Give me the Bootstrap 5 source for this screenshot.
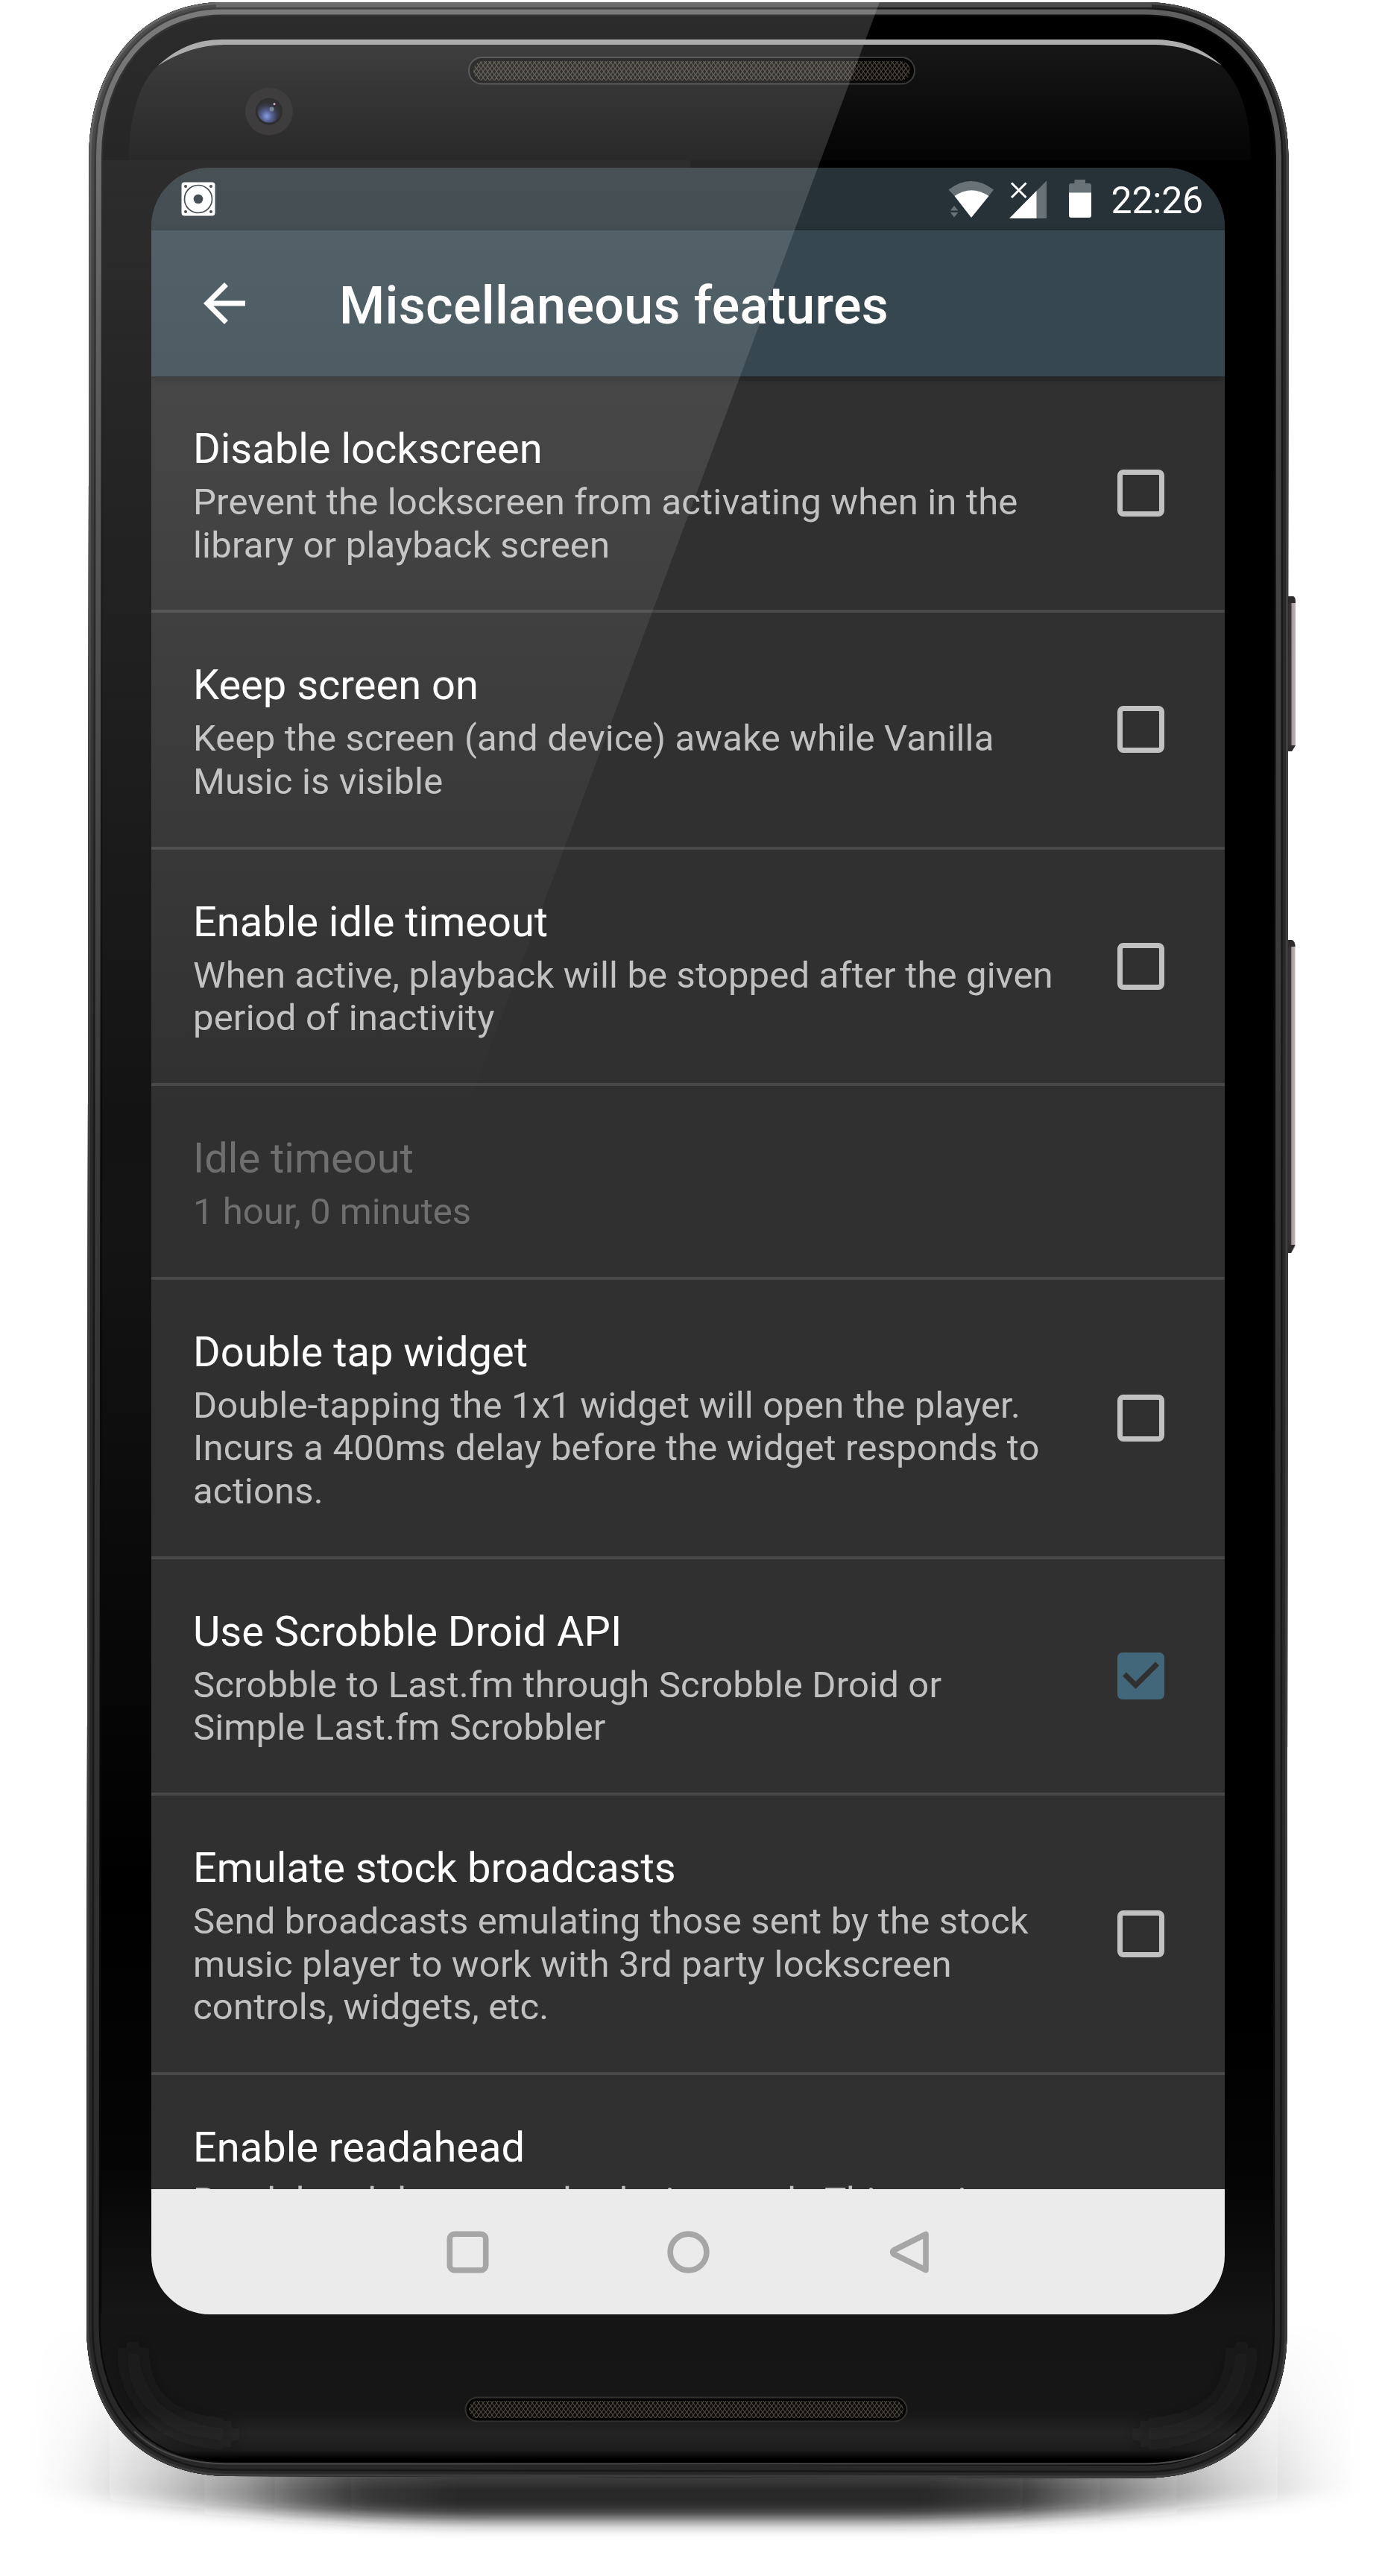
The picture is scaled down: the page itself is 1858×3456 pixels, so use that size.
<!DOCTYPE html>
<html lang="en">
<head>
<meta charset="utf-8">
<title>Miscellaneous features</title>
<meta name="viewport" content="width=device-width, initial-scale=1">
<link href="https://cdn.jsdelivr.net/npm/bootstrap@5.3.0/dist/css/bootstrap.min.css" rel="stylesheet">
<script src="https://cdn.jsdelivr.net/npm/bootstrap@5.3.0/dist/js/bootstrap.bundle.min.js"></script>
<style>
  body { background: #fff; font-family: Roboto, sans-serif; }
  .stage { width: 1858px; height: 3456px; padding: 225px 215px 351px 203px; }
  .device-art, .device-sheen { position: absolute; left: 0; top: 0; width: 1858px; height: 3456px; pointer-events: none; }
  .device-sheen { z-index: 5; }
  .phone-screen { width: 1440px; height: 2880px; border-radius: 79px; background: #303030; z-index: 2; color: #fff; }
  .status-strip { height: 84px; background: #273238; padding: 0 29px 0 40px; flex: none; }
  .status-strip .clock { font-size: 50px; line-height: 84px; margin-left: 26px; padding-top: 3px; letter-spacing: -.2px; }
  .app-toolbar { height: 196px; background: #37474f; padding-left: 56px; flex: none; box-shadow: 0 3px 9px rgba(0,0,0,.35); z-index: 1; }
  .app-toolbar h1 { font-size: 70px; line-height: 82px; font-weight: 500; margin: 6px 0 0 112px; letter-spacing: .32px; }
  .pref-list { flex: 1 1 0; min-height: 0; }
  .pref-row { padding: 64px 81px 0 56px; border-bottom: 4px solid #484848; flex: none; }
  .pref-name { font-size: 56px; line-height: 66px; white-space: nowrap; }
  .pref-note { font-size: 49px; line-height: 57.5px; margin-top: 10px; color: #c1c1c1; white-space: nowrap; letter-spacing: .18px; }
  .pref-2 { height: 317.3px; }
  .pref-1 { height: 260px; }
  .pref-3 { height: 375px; }
  .pref-off .pref-name, .pref-off .pref-note { color: #6f6f6f; letter-spacing: 0; }
  .tick { width: 63px; height: 63px; margin-top: -64px; flex: none; align-self: center; }
  .tick-empty { border: 7px solid #c1c1c1; border-radius: 8px; }
  .nav-strip { height: 168px; background: #ebebeb; flex: none; gap: 239px; }
</style>
</head>
<body>
<div class="stage position-relative overflow-hidden">

  <!-- handset body -->
  <svg class="device-art" viewBox="0 0 1858 3456" aria-hidden="true">
    <defs>
      <path id="body" d="M298 3H1536C1656 3 1728.500 96 1728.500 210L1726.500 3130C1726.500 3250 1652 3324.500 1536 3324.500L304 3322C186 3320 116 3240 116 3120L119.500 210C119.500 92 188 3 298 3Z"/>
      <clipPath id="bodyClip"><use href="#body"/></clipPath>
      <linearGradient id="edgeOuter" x1="0" y1="0" x2="0" y2="3456" gradientUnits="userSpaceOnUse">
        <stop offset="0" stop-color="#4a4a4a"/><stop offset=".2" stop-color="#414141"/><stop offset="1" stop-color="#3c3c3c"/>
      </linearGradient>
      <linearGradient id="edgeBand" x1="0" y1="0" x2="0" y2="3456" gradientUnits="userSpaceOnUse">
        <stop offset="0" stop-color="#606060"/><stop offset=".15" stop-color="#464646"/><stop offset=".5" stop-color="#363636"/><stop offset="1" stop-color="#262626"/>
      </linearGradient>
      <linearGradient id="leftBezel" x1="0" y1="215" x2="0" y2="3105" gradientUnits="userSpaceOnUse">
        <stop offset="0" stop-color="#080808"/><stop offset=".3" stop-color="#111"/><stop offset=".5" stop-color="#141414"/><stop offset=".68" stop-color="#080808"/><stop offset=".8" stop-color="#000"/><stop offset=".93" stop-color="#050505"/><stop offset="1" stop-color="#161616"/>
      </linearGradient>
      <linearGradient id="rightBezel" x1="0" y1="2700" x2="0" y2="3105" gradientUnits="userSpaceOnUse">
        <stop offset="0" stop-color="#000"/><stop offset=".6" stop-color="#050505"/><stop offset="1" stop-color="#141414"/>
      </linearGradient>
      <linearGradient id="topFace" x1="0" y1="60" x2="0" y2="215" gradientUnits="userSpaceOnUse">
        <stop offset="0" stop-color="#171717"/><stop offset=".5" stop-color="#0d0d0d"/><stop offset="1" stop-color="#040404"/>
      </linearGradient>
      <linearGradient id="chin" x1="0" y1="3105" x2="0" y2="3305" gradientUnits="userSpaceOnUse">
        <stop offset="0" stop-color="#151515"/><stop offset=".65" stop-color="#161616"/><stop offset=".8" stop-color="#242424"/><stop offset=".91" stop-color="#1c1c1c"/><stop offset=".97" stop-color="#000"/><stop offset="1" stop-color="#000"/>
      </linearGradient>
      <linearGradient id="keySide" x1="0" x2="1" y1="0" y2="0">
        <stop offset="0" stop-color="#2c2a2b"/><stop offset=".45" stop-color="#3d363b"/><stop offset=".55" stop-color="#a39a9c"/><stop offset="1" stop-color="#c0b5b2"/>
      </linearGradient>
      <linearGradient id="floorH" x1="40" x2="1830" y1="0" y2="0" gradientUnits="userSpaceOnUse">
        <stop offset="0" stop-color="#222" stop-opacity="0"/><stop offset=".035" stop-color="#222" stop-opacity=".05"/><stop offset=".1" stop-color="#222" stop-opacity=".25"/><stop offset=".16" stop-color="#222" stop-opacity=".48"/><stop offset=".2" stop-color="#222" stop-opacity=".7"/><stop offset=".25" stop-color="#222" stop-opacity=".9"/><stop offset=".32" stop-color="#222" stop-opacity=".97"/>
        <stop offset=".67" stop-color="#222" stop-opacity=".97"/><stop offset=".74" stop-color="#222" stop-opacity=".88"/><stop offset=".79" stop-color="#222" stop-opacity=".66"/><stop offset=".84" stop-color="#222" stop-opacity=".44"/><stop offset=".9" stop-color="#222" stop-opacity=".22"/><stop offset=".965" stop-color="#222" stop-opacity=".05"/><stop offset="1" stop-color="#222" stop-opacity="0"/>
      </linearGradient>
      <linearGradient id="floorV" x1="0" y1="3110" x2="0" y2="3340" gradientUnits="userSpaceOnUse">
        <stop offset="0" stop-color="#000"/><stop offset=".5" stop-color="#555"/><stop offset="1" stop-color="#fff"/>
      </linearGradient>
      <mask id="floorMask" maskUnits="userSpaceOnUse" x="0" y="3000" width="1858" height="456"><rect y="3000" width="1858" height="456" fill="url(#floorV)"/></mask>
      <filter id="floorBlur" x="-5%" y="-20%" width="110%" height="140%"><feGaussianBlur stdDeviation="11"/></filter>
      <filter id="glowBlur" x="-60%" y="-60%" width="220%" height="220%"><feGaussianBlur stdDeviation="12"/></filter>
      <pattern id="mesh" width="6" height="8" patternUnits="userSpaceOnUse">
        <rect width="6" height="8" fill="#0b0a08"/>
        <path d="M0 0L3 4L0 8M6 0L3.500 4L6 8" fill="none" stroke="#4d483f" stroke-width="1.100"/>
      </pattern>
      <radialGradient id="lens" cx=".4" cy=".72" r=".6">
        <stop offset="0" stop-color="#6f8be0"/><stop offset=".35" stop-color="#3c4a86"/><stop offset=".75" stop-color="#16172a"/><stop offset="1" stop-color="#0b0b0e"/>
      </radialGradient>
    </defs>

    <g mask="url(#floorMask)">
      <path filter="url(#floorBlur)" fill="url(#floorH)" d="M50 3110H1810V3345Q1500 3378 1200 3381H640Q350 3378 50 3345Z"/>
    </g>

    <path d="M1727 800H1735Q1738 801 1738 806V1000L1733 1008H1727Z" fill="url(#keySide)"/>
    <path d="M1727 800H1735Q1738 801 1738 809H1727ZM1727 1008H1733L1738 1000H1727Z" fill="#2e2b2c"/>
    <path d="M1727 1261H1733Q1737.500 1263 1737.500 1268V1673L1732 1681H1727Z" fill="url(#keySide)"/>
    <path d="M1727 1261H1733Q1737.500 1263 1737.500 1270H1727ZM1727 1681H1732L1737.500 1670H1727Z" fill="#2e2b2c"/>

    <g clip-path="url(#bodyClip)">
      <use href="#body" fill="#000"/>
      <rect x="136" y="215" width="790" height="2890" fill="url(#leftBezel)"/>
      <rect x="920" y="2700" width="790" height="405" fill="url(#rightBezel)"/>
      <path d="M173 215C173 150 190 100 222 80Q250 60 300 60H1550Q1600 60 1634 84C1662 108 1678 150 1678 215Z" fill="url(#topFace)"/>
      <path d="M134 3104H1710V3130C1710 3235 1640 3306 1536 3306H304C200 3304 134 3230 134 3120Z" fill="url(#chin)"/>
      <path d="M178 3150C180 3225 225 3264 310 3266" fill="none" stroke="#222" stroke-opacity=".7" stroke-width="20" filter="url(#glowBlur)"/>
      <path d="M1666 3150C1664 3225 1620 3264 1530 3266" fill="none" stroke="#222" stroke-opacity=".7" stroke-width="20" filter="url(#glowBlur)"/>
      <use href="#body" fill="none" stroke="#0a0a0a" stroke-width="38"/>
      <use href="#body" fill="none" stroke="url(#edgeBand)" stroke-width="33"/>
      <use href="#body" fill="none" stroke="#181818" stroke-width="19"/>
      <use href="#body" fill="none" stroke="#292929" stroke-width="14"/>
      <use href="#body" fill="none" stroke="url(#edgeOuter)" stroke-width="6"/>
      <path d="M290 5H1545" stroke="#4c4c4c" stroke-width="10"/>
      <path d="M180 3262C215 3296 260 3305 304 3305.500H1536C1590 3305 1630 3290 1658 3265" fill="none" stroke="#4a4a4a" stroke-width="2"/>
    </g>

    <rect x="629" y="77" width="598" height="35.500" rx="17.500" fill="#050505" stroke="#3c3c3c" stroke-width="2"/>
    <rect x="635" y="82" width="586" height="26" rx="13" fill="url(#mesh)"/>
    <rect x="624.500" y="3216.500" width="592" height="32" rx="16" fill="#050505" stroke="#33312e" stroke-width="2"/>
    <rect x="629" y="3221" width="583" height="23" rx="11.500" fill="url(#mesh)"/>

    <circle cx="361" cy="149.500" r="32" fill="#1b1919"/>
    <circle cx="361" cy="149.500" r="18" fill="#08080a"/>
    <circle cx="361" cy="149" r="15.500" fill="url(#lens)"/>
    <circle cx="364.500" cy="146.500" r="3" fill="#5f6f86"/>
    <circle cx="368" cy="139.500" r="1.500" fill="#e0a0c0"/>
  </svg>

  <!-- screen -->
  <main class="phone-screen position-relative overflow-hidden d-flex flex-column">
    <div class="status-strip d-flex align-items-center">
      <svg width="46" height="46" viewBox="0 0 46 46">
        <rect x=".5" y=".5" width="45" height="45" rx="4" fill="#fff"/>
        <g fill="#273238"><circle cx="6" cy="6" r="2"/><circle cx="40" cy="6" r="2"/><circle cx="6" cy="40" r="2"/><circle cx="40" cy="40" r="2"/><circle cx="23" cy="23" r="6.300"/></g>
        <circle cx="23" cy="23" r="18.500" fill="none" stroke="#273238" stroke-width="1.700"/>
      </svg>
      <!-- wifi, mobile signal and battery -->
      <svg class="ms-auto" width="192" height="54" viewBox="1273 240 192 54">
        <path d="M1273.500 254.500Q1303.500 231.500 1334 254.500L1327.500 263Q1303.500 248 1281.500 263Z" fill="#697276"/>
        <path d="M1281.500 263Q1304 247.500 1327.500 263L1304 292Z" fill="#fff"/>
        <path d="M1276 282.500L1281 276L1286.500 282.500ZM1276 285L1281 291.500L1286.500 285Z" fill="#697276"/>
        <path d="M1405 242.500V293H1355Z" fill="#697276"/>
        <path d="M1391.500 256V293H1355Z" fill="#fff"/>
        <path d="M1358 245.500L1377.500 265M1377.500 245.500L1358 265" stroke="#273238" stroke-width="8"/>
        <path d="M1358 245.500L1377.500 265M1377.500 245.500L1358 265" stroke="#fff" stroke-width="3"/>
        <path d="M1442.500 241H1457V246H1462Q1465 246 1465 249V259H1435V249Q1435 246 1438 246H1442.500Z" fill="#697276"/>
        <path d="M1435 258.500H1465V289Q1465 292 1462 292H1438Q1435 292 1435 289Z" fill="#fff"/>
      </svg>
      <span class="clock">22:26</span>
    </div>

    <header class="app-toolbar d-flex align-items-center position-relative">
      <svg width="84" height="84" viewBox="0 0 24 24" fill="#fff"><path d="M20 11H7.830l5.590-5.590L12 4l-8 8 8 8 1.410-1.410L7.830 13H20v-2z"/></svg>
      <h1>Miscellaneous features</h1>
    </header>

    <section class="pref-list overflow-hidden d-flex flex-column">
      <div class="pref-row pref-2 d-flex justify-content-between">
        <div><div class="pref-name">Disable lockscreen</div><div class="pref-note">Prevent the lockscreen from activating when in the<br>library or playback screen</div></div>
        <div class="tick tick-empty"></div>
      </div>
      <div class="pref-row pref-2 d-flex justify-content-between">
        <div><div class="pref-name">Keep screen on</div><div class="pref-note">Keep the screen (and device) awake while Vanilla<br>Music is visible</div></div>
        <div class="tick tick-empty"></div>
      </div>
      <div class="pref-row pref-2 d-flex justify-content-between">
        <div><div class="pref-name">Enable idle timeout</div><div class="pref-note">When active, playback will be stopped after the given<br>period of inactivity</div></div>
        <div class="tick tick-empty"></div>
      </div>
      <div class="pref-row pref-1 pref-off">
        <div class="pref-name">Idle timeout</div><div class="pref-note">1 hour, 0 minutes</div>
      </div>
      <div class="pref-row pref-3 d-flex justify-content-between">
        <div><div class="pref-name">Double tap widget</div><div class="pref-note">Double-tapping the 1x1 widget will open the player.<br>Incurs a 400ms delay before the widget responds to<br>actions.</div></div>
        <div class="tick tick-empty"></div>
      </div>
      <div class="pref-row pref-2 d-flex justify-content-between">
        <div><div class="pref-name">Use Scrobble Droid API</div><div class="pref-note">Scrobble to Last.fm through Scrobble Droid or<br>Simple Last.fm Scrobbler</div></div>
        <svg class="tick" viewBox="3 3 18 18" fill="#42677a"><path d="M19 3H5c-1.110 0-2 .9-2 2v14c0 1.100.89 2 2 2h14c1.110 0 2-.9 2-2V5c0-1.100-.89-2-2-2zm-9 14l-5-5 1.410-1.410L10 14.170l7.590-7.590L19 8l-9 9z"/></svg>
      </div>
      <div class="pref-row pref-3 d-flex justify-content-between">
        <div><div class="pref-name">Emulate stock broadcasts</div><div class="pref-note">Send broadcasts emulating those sent by the stock<br>music player to work with 3rd party lockscreen<br>controls, widgets, etc.</div></div>
        <div class="tick tick-empty"></div>
      </div>
      <div class="pref-row pref-2">
        <div class="pref-name">Enable readahead</div><div class="pref-note">Readahead the currently playing track. This option</div>
      </div>
    </section>

    <nav class="nav-strip d-flex justify-content-center align-items-center">
      <svg width="57" height="57" viewBox="0 0 57 57" fill="none" stroke="#a6a6a6" stroke-width="7.600"><rect x="4.300" y="4.300" width="48.400" height="48.400" rx="6.500"/></svg>
      <svg width="57" height="57" viewBox="0 0 57 57" fill="none" stroke="#a6a6a6" stroke-width="7.600"><circle cx="28.500" cy="28.500" r="24.400"/></svg>
      <svg width="57" height="57" viewBox="0 0 57 57" fill="none" stroke="#a6a6a6" stroke-width="7.600" stroke-linejoin="round"><path d="M51 4.500V52.500L8 31Q5.500 28.500 8 26Z"/></svg>
    </nav>
  </main>

  <!-- diagonal glass reflection -->
  <svg class="device-sheen" viewBox="0 0 1858 3456" aria-hidden="true">
    <defs>
      <linearGradient id="sheen" x1="0" y1="0" x2="0" y2="1500" gradientUnits="userSpaceOnUse">
        <stop offset="0" stop-color="#fff" stop-opacity=".175"/><stop offset=".33" stop-color="#fff" stop-opacity=".115"/><stop offset=".76" stop-color="#fff" stop-opacity=".04"/><stop offset="1" stop-color="#fff" stop-opacity="0"/>
      </linearGradient>
    </defs>
    <path clip-path="url(#bodyClip)" d="M0 0H1181L622 1500H0Z" fill="url(#sheen)"/>
    <path d="M212 88C236 66 262 53 298 53H1552C1590 54 1617 68 1639 88C1610 70 1585 61 1550 60H300C268 61 240 70 212 88Z" fill="#adadad"/>
  </svg>
</div>
</body>
</html>
